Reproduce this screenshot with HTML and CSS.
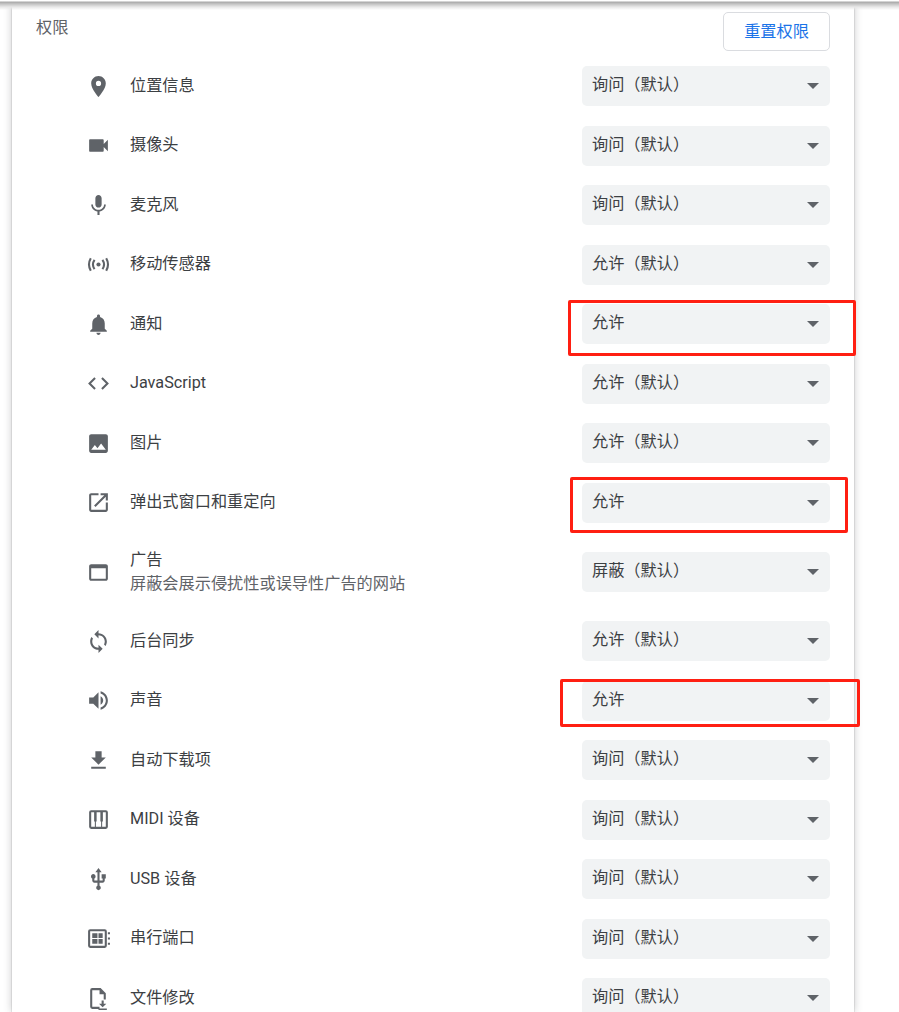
FILE: index.html
```html
<!DOCTYPE html>
<html lang="zh-CN">
<head>
    <meta charset="UTF-8">
    <meta name="viewport" content="width=device-width, initial-scale=1.0">
    <title>权限</title>
    <link rel="stylesheet" href="styles.css">
</head>
<body>
    <div class="page">
        <div class="toolbar-shadow"></div>

        <div class="card">
            <div class="card-header">
                <h2>权限</h2>
                <button class="reset-btn">重置权限</button>
            </div>

            <div class="perm-row">
                <svg class="perm-icon" viewBox="0 0 24 24"><path d="M12 2C8.13 2 5 5.13 5 9c0 5.25 7 13 7 13s7-7.75 7-13c0-3.87-3.13-7-7-7zm0 9.5a2.5 2.5 0 0 1 0-5 2.5 2.5 0 0 1 0 5z"/></svg>
                <div class="perm-label">位置信息</div>
                <div class="perm-select">询问（默认）<span class="arrow"></span></div>
            </div>
            <div class="perm-row">
                <svg class="perm-icon" viewBox="0 0 24 24"><path d="M17 10.5V7c0-.55-.45-1-1-1H4c-.55 0-1 .45-1 1v10c0 .55.45 1 1 1h12c.55 0 1-.45 1-1v-3.5l4 4v-11l-4 4z"/></svg>
                <div class="perm-label">摄像头</div>
                <div class="perm-select">询问（默认）<span class="arrow"></span></div>
            </div>
            <div class="perm-row">
                <svg class="perm-icon" viewBox="0 0 24 24"><path d="M12 14c1.66 0 3-1.34 3-3V5c0-1.66-1.34-3-3-3S9 3.34 9 5v6c0 1.66 1.34 3 3 3zm5.3-3c0 3-2.54 5.1-5.3 5.1S6.7 14 6.7 11H5c0 3.41 2.72 6.23 6 6.72V21h2v-3.28c3.28-.48 6-3.3 6-6.72h-1.7z"/></svg>
                <div class="perm-label">麦克风</div>
                <div class="perm-select">询问（默认）<span class="arrow"></span></div>
            </div>
            <div class="perm-row">
                <svg class="perm-icon" viewBox="0 0 24 24"><circle cx="12" cy="12" r="2"/><path class="stroke" d="M8.2 7.5a8 8 0 0 0 0 9M15.8 7.5a8 8 0 0 1 0 9M4.6 6a12 12 0 0 0 0 12M19.4 6a12 12 0 0 1 0 12"/></svg>
                <div class="perm-label">移动传感器</div>
                <div class="perm-select">允许（默认）<span class="arrow"></span></div>
            </div>
            <div class="perm-row">
                <svg class="perm-icon" viewBox="0 0 24 24"><path d="M12 22c1.1 0 2-.9 2-2h-4c0 1.1.89 2 2 2zm6-6v-5c0-3.07-1.64-5.64-4.5-6.32V4c0-.83-.67-1.5-1.5-1.5s-1.5.67-1.5 1.5v.68C7.63 5.36 6 7.92 6 11v5l-2 2v1h16v-1l-2-2z"/></svg>
                <div class="perm-label">通知</div>
                <div class="perm-select">允许<span class="arrow"></span></div>
            </div>
            <div class="perm-row">
                <svg class="perm-icon" viewBox="0 0 24 24"><path d="M9.4 16.6L4.8 12l4.6-4.6L8 6l-6 6 6 6 1.4-1.4zm5.2 0l4.6-4.6-4.6-4.6L16 6l6 6-6 6-1.4-1.4z"/></svg>
                <div class="perm-label">JavaScript</div>
                <div class="perm-select">允许（默认）<span class="arrow"></span></div>
            </div>
            <div class="perm-row">
                <svg class="perm-icon" viewBox="0 0 24 24"><path d="M21 19V5c0-1.1-.9-2-2-2H5c-1.1 0-2 .9-2 2v14c0 1.1.9 2 2 2h14c1.1 0 2-.9 2-2zM8.5 13.5l2.5 3.01L14.5 12l4.5 6H5l3.5-4.5z"/></svg>
                <div class="perm-label">图片</div>
                <div class="perm-select">允许（默认）<span class="arrow"></span></div>
            </div>
            <div class="perm-row">
                <svg class="perm-icon" viewBox="0 0 24 24"><path d="M19 19H5V5h7V3H5c-1.11 0-2 .9-2 2v14c0 1.1.89 2 2 2h14c1.1 0 2-.9 2-2v-7h-2v7zM14 3v2h3.59l-9.83 9.83 1.41 1.41L19 6.41V10h2V3h-7z"/></svg>
                <div class="perm-label">弹出式窗口和重定向</div>
                <div class="perm-select">允许<span class="arrow"></span></div>
            </div>
            <div class="perm-row perm-row-tall">
                <svg class="perm-icon" viewBox="0 0 24 24"><path d="M19 4H5c-1.11 0-2 .9-2 2v12c0 1.1.89 2 2 2h14c1.1 0 2-.9 2-2V6c0-1.1-.89-2-2-2zm0 14H5V8h14v10z"/></svg>
                <div class="perm-label">广告<div class="perm-sub">屏蔽会展示侵扰性或误导性广告的网站</div></div>
                <div class="perm-select">屏蔽（默认）<span class="arrow"></span></div>
            </div>
            <div class="perm-row">
                <svg class="perm-icon" viewBox="0 0 24 24"><path d="M12 4V1L8 5l4 4V6c3.31 0 6 2.69 6 6 0 1.01-.25 1.97-.7 2.8l1.46 1.46C19.54 15.03 20 13.57 20 12c0-4.42-3.58-8-8-8zm0 14c-3.31 0-6-2.69-6-6 0-1.01.25-1.97.7-2.8L5.24 7.74C4.46 8.97 4 10.43 4 12c0 4.42 3.58 8 8 8v3l4-4-4-4v3z"/></svg>
                <div class="perm-label">后台同步</div>
                <div class="perm-select">允许（默认）<span class="arrow"></span></div>
            </div>
            <div class="perm-row">
                <svg class="perm-icon" viewBox="0 0 24 24"><path d="M3 9v6h4l5 5V4L7 9H3zm13.5 3c0-1.77-1.02-3.29-2.5-4.03v8.05c1.48-.73 2.5-2.25 2.5-4.02zM14 3.230v2.060c2.890.860 5 3.540 5 6.710s-2.110 5.850-5 6.710v2.060c4.010-.910 7-4.490 7-8.770s-2.990-7.860-7-8.770z"/></svg>
                <div class="perm-label">声音</div>
                <div class="perm-select">允许<span class="arrow"></span></div>
            </div>
            <div class="perm-row">
                <svg class="perm-icon" viewBox="0 0 24 24"><path d="M19 9h-4V3H9v6H5l7 7 7-7zM5 18v2h14v-2H5z"/></svg>
                <div class="perm-label">自动下载项</div>
                <div class="perm-select">询问（默认）<span class="arrow"></span></div>
            </div>
            <div class="perm-row">
                <svg class="perm-icon" viewBox="0 0 24 24"><path fill-rule="evenodd" d="M5 3h14a2 2 0 0 1 2 2v14a2 2 0 0 1-2 2H5a2 2 0 0 1-2-2V5a2 2 0 0 1 2-2zm0 2v14h3.500v-5h-.7V5H5zm5.200 0v9h-.7v5h5v-5h-.7V5h-3.600zm6 0v9h-.7v5H19V5h-2.800z"/></svg>
                <div class="perm-label">MIDI 设备</div>
                <div class="perm-select">询问（默认）<span class="arrow"></span></div>
            </div>
            <div class="perm-row">
                <svg class="perm-icon" viewBox="0 0 24 24"><path d="M15 7v4h1v2h-3V5h2l-3-4-3 4h2v8H8v-2.07c.7-.37 1.2-1.08 1.2-1.93 0-1.21-.99-2.2-2.2-2.2-1.21 0-2.2.99-2.2 2.2 0 .85.5 1.56 1.2 1.93V13c0 1.11.89 2 2 2h3v3.05c-.71.37-1.2 1.1-1.2 1.95 0 1.22.99 2.2 2.2 2.2 1.21 0 2.2-.98 2.2-2.2 0-.85-.49-1.58-1.2-1.95V15h3c1.11 0 2-.89 2-2v-2h1V7h-4z"/></svg>
                <div class="perm-label">USB 设备</div>
                <div class="perm-select">询问（默认）<span class="arrow"></span></div>
            </div>
            <div class="perm-row">
                <svg class="perm-icon" viewBox="0 0 24 24"><path fill-rule="evenodd" d="M4 3h14a2 2 0 0 1 2 2v14a2 2 0 0 1-2 2H4a2 2 0 0 1-2-2V5a2 2 0 0 1 2-2zm0 2v14h14V5H4zm2 2h5v4.500H6V7zm0 5.500h5V17H6v-4.500zM12 7h4v4.500h-4V7zm0 5.500h4V17h-4v-4.500zM21 6h2v2h-2V6zm0 5h2v2h-2v-2zm0 5h2v2h-2v-2z"/></svg>
                <div class="perm-label">串行端口</div>
                <div class="perm-select">询问（默认）<span class="arrow"></span></div>
            </div>
            <div class="perm-row">
                <svg class="perm-icon" viewBox="0 0 24 24"><path d="M6 2h8l5 5v6h-2V8h-4V4H6v16h7v2H6a2 2 0 0 1-2-2V4a2 2 0 0 1 2-2zM17 14v3h2.500L16 20.500 12.500 17H15v-3h2zM12 21.500h8V23h-8v-1.500z"/></svg>
                <div class="perm-label">文件修改</div>
                <div class="perm-select">询问（默认）<span class="arrow"></span></div>
            </div>
        </div>

        <!-- Red marks drawn over the screenshot -->
        <div class="mark mark-notify"></div>
        <div class="mark mark-popup"></div>
        <div class="mark mark-sound"></div>
    </div>
</body>
</html>
```

FILE: styles.css
```css
html,
body {
    margin: 0;
    padding: 0;
    background-color: #fff;
}

body {
    font-family: Roboto, "Noto Sans CJK SC", sans-serif;
    font-size: 16.2px;
    color: #3c4043;
}

.page {
    position: relative;
    height: 1012px;
    overflow: hidden;
}

.toolbar-shadow {
    position: absolute;
    top: 0;
    left: 0;
    right: 0;
    height: 10px;
    z-index: 2;
    background: linear-gradient(#fff 0, #fff 1px, #a8a8a8 2px, #c4c4c4 4px, #e8e8e8 7px, rgba(255, 255, 255, 0) 10px);
}

.card {
    margin-left: 12px;
    width: 842px;
    height: 1012px;
    background-color: #fff;
    box-shadow: 0 0 1px rgba(60, 64, 67, 0.5), 0 0 8px rgba(60, 64, 67, 0.3);
}

.card-header {
    display: flex;
    justify-content: space-between;
    align-items: flex-start;
    height: 56.4px;
    padding: 12px 24px 0;
    box-sizing: border-box;
}

.card-header h2 {
    margin: 5px 0 0;
    font-size: 16.2px;
    font-weight: 400;
    line-height: 22px;
    color: #5f6368;
}

.reset-btn {
    width: 107px;
    height: 39px;
    padding: 0 0 3px;
    background-color: #fff;
    border: 1px solid #dadce0;
    border-radius: 5px;
    color: #1a73e8;
    font-family: inherit;
    font-size: 16.2px;
}

.perm-row {
    display: flex;
    align-items: center;
    height: 59.5px;
    padding-left: 74px;
    padding-right: 24px;
}

.perm-row-tall {
    height: 79.3px;
}

.perm-icon {
    flex: none;
    width: 25px;
    height: 25px;
    margin-right: 19px;
    fill: #5f6368;
}

.perm-icon .stroke {
    fill: none;
    stroke: #5f6368;
    stroke-width: 2;
}

.perm-label {
    flex: 1;
    padding-bottom: 1px;
    line-height: 24px;
    color: #3c4043;
}

.perm-sub {
    color: #5f6368;
}

.perm-select {
    position: relative;
    width: 248px;
    height: 40px;
    padding-left: 10px;
    box-sizing: border-box;
    line-height: 38px;
    background-color: #f1f3f4;
    border-radius: 5px;
}

.arrow {
    position: absolute;
    top: 17px;
    right: 11px;
    width: 0;
    height: 0;
    border-left: 6px solid transparent;
    border-right: 6px solid transparent;
    border-top: 6px solid #5f6368;
}

.mark {
    position: absolute;
    box-sizing: border-box;
    border: 3px solid #ff1f12;
    border-radius: 2px;
}

.mark-notify {
    left: 568px;
    top: 300px;
    width: 288px;
    height: 56px;
}

.mark-popup {
    left: 570px;
    top: 477px;
    width: 278px;
    height: 56px;
}

.mark-sound {
    left: 560px;
    top: 679px;
    width: 300px;
    height: 48px;
}
```
